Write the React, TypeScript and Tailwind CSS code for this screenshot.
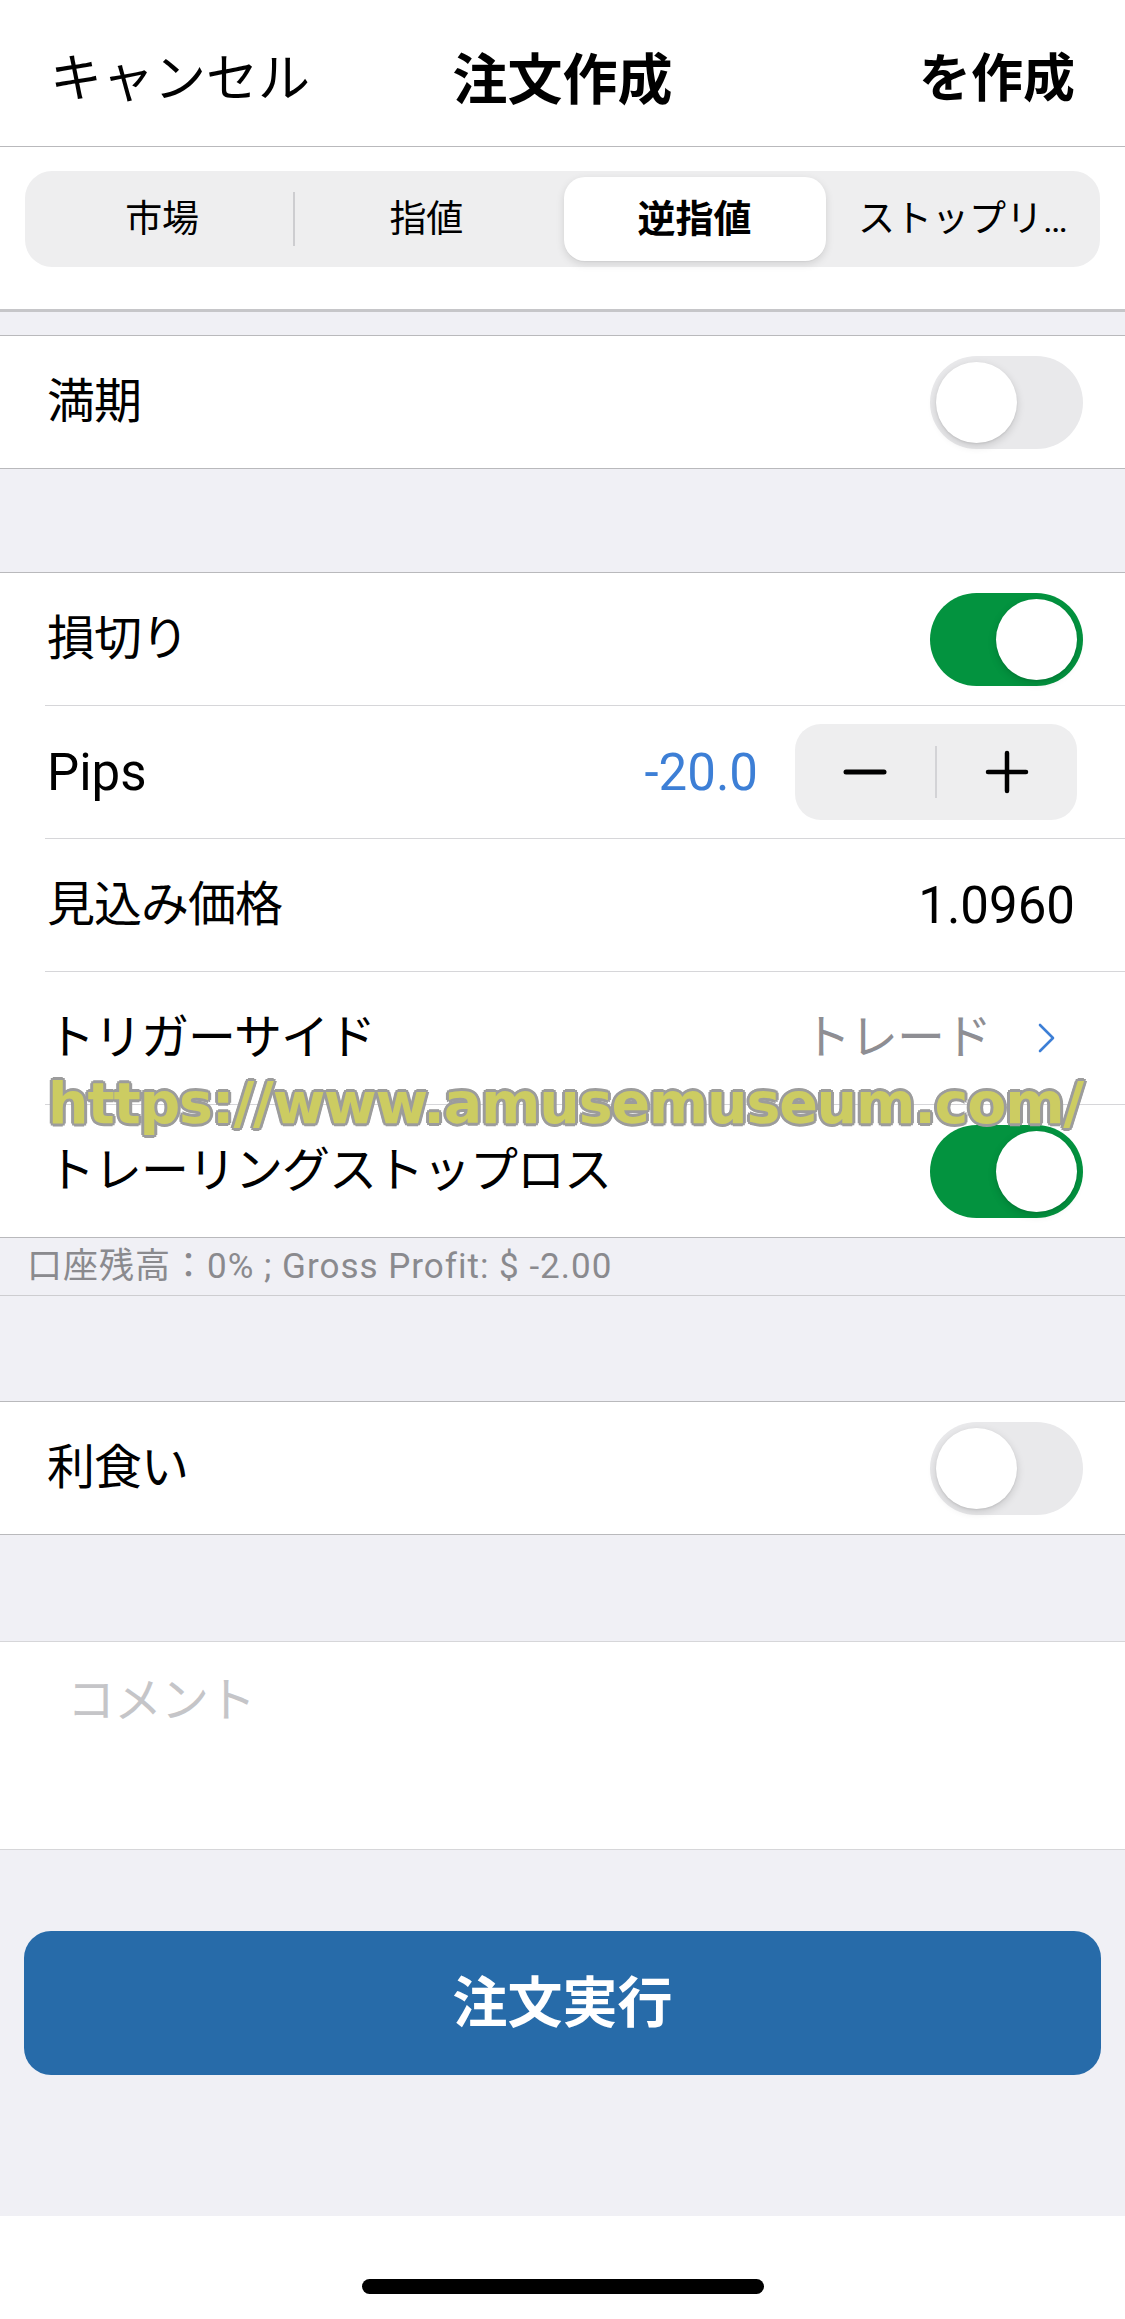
import React from 'react';

const Toggle: React.FC<{ on: boolean }> = ({ on }) => (
  <div
    className={
      on
        ? 'w-[153px] h-[93px] rounded-full bg-[#03933f] flex items-center justify-end p-[6px]'
        : 'w-[153px] h-[93px] rounded-full bg-[#e9e9eb] flex items-center justify-start p-[6px]'
    }
  >
    <div className="w-[81px] h-[81px] rounded-full bg-white shadow-[0_3px_8px_rgba(0,0,0,0.15),0_1px_2px_rgba(0,0,0,0.08)]" />
  </div>
);

const Row: React.FC<{ label: string; pr: string; latin?: boolean; children?: React.ReactNode }> = ({ label, pr, latin, children }) => (
  <div className={`h-[132px] flex items-center justify-between pl-[47px] ${pr}`}>
    <span className={latin ? 'text-[51px] leading-none' : 'text-[48px] leading-none tracking-[-1px]'}>{label}</span>
    {children}
  </div>
);

const Sep = () => <div className="ml-[45px] h-px bg-[#d6d6d9]" />;

const Stepper = () => (
  <div className="w-[282px] h-[96px] rounded-[26px] bg-[#eeeeef] flex items-center">
    <div className="flex-1 flex items-center justify-center">
      <svg width="44" height="44" viewBox="0 0 44 44">
        <line x1="3" y1="22" x2="41" y2="22" stroke="#000" strokeWidth="5" strokeLinecap="round" />
      </svg>
    </div>
    <div className="w-[2px] h-[52px] bg-[#d3d3d6]" />
    <div className="flex-1 flex items-center justify-center">
      <svg width="44" height="44" viewBox="0 0 44 44">
        <line x1="3" y1="22" x2="41" y2="22" stroke="#000" strokeWidth="4.5" strokeLinecap="round" />
        <line x1="22" y1="3" x2="22" y2="41" stroke="#000" strokeWidth="4.5" strokeLinecap="round" />
      </svg>
    </div>
  </div>
);

const App: React.FC = () => {
  return (
    <div className="relative w-full min-h-[2319px] flex flex-col bg-[#f0f0f5] text-black font-[Roboto,'Noto_Sans_CJK_JP',sans-serif]">
      {/* nav bar */}
      <div className="h-[147px] bg-white border-b border-[#b9b9bc] grid grid-cols-3 items-center px-[50px] pt-[14px]">
        <span className="text-[52px] leading-none">キャンセル</span>
        <span className="text-[55px] leading-none font-bold text-center">注文作成</span>
        <span className="text-[52px] leading-none font-bold text-right">を作成</span>
      </div>

      {/* order type */}
      <div className="bg-white pt-[24px] pb-[42px] px-[25px] border-b-[3px] border-[#c6c6c9]">
        <div className="h-[96px] rounded-[27px] bg-[#eeeeef] p-[6px] flex items-center">
          <div className="flex-1 h-full flex items-center justify-center text-[37px] leading-none">市場</div>
          <div className="w-[2px] h-[54px] bg-[#cdcdd0]" />
          <div className="flex-1 h-full flex items-center justify-center text-[37px] leading-none">指値</div>
          <div className="flex-1 h-full px-[6px]">
            <div className="h-full rounded-[21px] bg-white shadow-[0_3px_8px_rgba(0,0,0,0.12),0_1px_1px_rgba(0,0,0,0.04)] flex items-center justify-center text-[38px] leading-none font-bold">
              逆指値
            </div>
          </div>
          <div className="flex-1 h-full flex items-center justify-center text-[37px] leading-none">ストップリ…</div>
        </div>
      </div>

      <div className="h-[23px]" />

      <div className="bg-white border-y border-[#b9b9bc]">
        <Row label="満期" pr="pr-[42px]">
          <Toggle on={false} />
        </Row>
      </div>

      <div className="h-[103px]" />

      <div className="bg-white border-y border-[#b9b9bc]">
        <Row label="損切り" pr="pr-[42px]">
          <Toggle on />
        </Row>
        <Sep />
        <Row label="Pips" pr="pr-[48px]" latin>
          <div className="flex items-center gap-[37px]">
            <span className="text-[51px] leading-none text-[#3d7fd6]">-20.0</span>
            <Stepper />
          </div>
        </Row>
        <Sep />
        <Row label="見込み価格" pr="pr-[50px]">
          <span className="text-[51px] leading-none">1.0960</span>
        </Row>
        <Sep />
        <Row label="トリガーサイド" pr="pr-[68px]">
          <div className="flex items-center gap-[46px]">
            <span className="text-[48px] leading-none tracking-[-1px] text-[#8e8e93]">トレード</span>
            <svg width="20" height="32" viewBox="0 0 20 32">
              <path d="M3 3 L16 16 L3 29" fill="none" stroke="#3d7fd6" strokeWidth="2.6" strokeLinecap="round" strokeLinejoin="round" />
            </svg>
          </div>
        </Row>
        <Sep />
        <Row label="トレーリングストップロス" pr="pr-[42px]">
          <Toggle on />
        </Row>
      </div>

      <div className="h-[58px] flex items-center pl-[27px] text-[35px] leading-none tracking-[1px] text-[#8a8a8e] border-b border-[#cdcdd0]">
        口座残高：0% ; Gross Profit: $ -2.00
      </div>

      <div className="h-[105px]" />

      <div className="bg-white border-y border-[#b9b9bc]">
        <Row label="利食い" pr="pr-[42px]">
          <Toggle on={false} />
        </Row>
      </div>

      <div className="h-[106px]" />

      <div className="bg-white border-y border-[#d6d6d9] h-[209px] pl-[67px] pt-[35px]">
        <span className="text-[48px] leading-none tracking-[-1px] text-[#c5c5c8]">コメント</span>
      </div>

      <div className="h-[366px] pt-[81px] px-[24px]">
        <button className="w-full h-[144px] rounded-[27px] bg-[#276ba9] flex items-center justify-center text-white font-bold text-[55px] leading-none">
          注文実行
        </button>
      </div>

      <div className="flex-1 bg-white pt-[63px]">
        <div className="w-[402px] h-[15px] rounded-full bg-black mx-auto" />
      </div>

      {/* watermark */}
      <div className="absolute top-[1075px] left-[48px] text-[57px] leading-none font-bold tracking-[-1.2px] text-[#cccc62] font-['DejaVu_Sans',sans-serif] whitespace-nowrap pointer-events-none [text-shadow:3px_0_#9c9c9c,-3px_0_#9c9c9c,0_3px_#9c9c9c,0_-3px_#9c9c9c,2px_2px_#9c9c9c,-2px_-2px_#9c9c9c,2px_-2px_#9c9c9c,-2px_2px_#9c9c9c]">
        https://www.amusemuseum.com/
      </div>
    </div>
  );
};

export default App;
